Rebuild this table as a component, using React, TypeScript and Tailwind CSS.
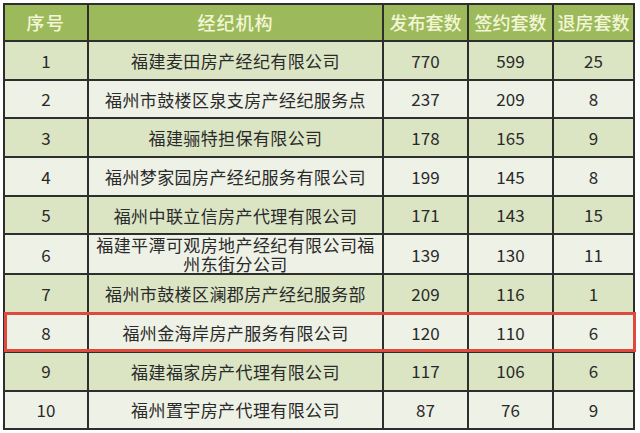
const rows = [
  { no: '1', name: '福建麦田房产经纪有限公司', pub: '770', sign: '599', back: '25' },
  { no: '2', name: '福州市鼓楼区泉支房产经纪服务点', pub: '237', sign: '209', back: '8' },
  { no: '3', name: '福建骊特担保有限公司', pub: '178', sign: '165', back: '9' },
  { no: '4', name: '福州梦家园房产经纪服务有限公司', pub: '199', sign: '145', back: '8' },
  { no: '5', name: '福州中联立信房产代理有限公司', pub: '171', sign: '143', back: '15' },
  { no: '6', name: '福建平潭可观房地产经纪有限公司福州东街分公司', pub: '139', sign: '130', back: '11' },
  { no: '7', name: '福州市鼓楼区澜郡房产经纪服务部', pub: '209', sign: '116', back: '1' },
  { no: '8', name: '福州金海岸房产服务有限公司', pub: '120', sign: '110', back: '6' },
  { no: '9', name: '福建福家房产代理有限公司', pub: '117', sign: '106', back: '6' },
  { no: '10', name: '福州置宇房产代理有限公司', pub: '87', sign: '76', back: '9' },
]

const font = { fontFamily: '"Noto Sans CJK SC", "Liberation Sans", sans-serif' }

export default function App() {
  return (
    <div className="w-[640px] h-[433px] bg-white pt-[3px] pl-[3px]" style={font}>
      <div className="relative w-[630px]">
        <table className="w-full border-collapse table-fixed text-[17px] text-[#2a2a2a]">
          <colgroup>
            <col className="w-[84px]" />
            <col className="w-[295px]" />
            <col className="w-[85px]" />
            <col className="w-[85px]" />
            <col className="w-[81px]" />
          </colgroup>
          <thead>
            <tr className="h-[37px] bg-[#9cba5c] text-[#f3f6d6] text-[18px]">
              <th className="border-2 border-[#2e2e2e] font-medium tracking-[1.5px]">序号</th>
              <th className="border-2 border-[#2e2e2e] font-medium tracking-[1px]">经纪机构</th>
              <th className="border-2 border-[#2e2e2e] font-medium px-0">发布套数</th>
              <th className="border-2 border-[#2e2e2e] font-medium px-0">签约套数</th>
              <th className="border-2 border-[#2e2e2e] font-medium px-0">退房套数</th>
            </tr>
          </thead>
          <tbody>
            {rows.map((r, i) => (
              <tr key={r.no} className={`h-[38.7px] ${i % 2 === 0 ? 'bg-[#dbe5c4]' : 'bg-[#eef1e6]'}`}>
                <td className="border-2 border-[#2e2e2e] text-center">{r.no}</td>
                <td className="border-2 border-[#2e2e2e] text-center px-[3px] leading-[19px] tracking-[0.4px]">{r.name}</td>
                <td className="border-2 border-[#2e2e2e] text-center">{r.pub}</td>
                <td className="border-2 border-[#2e2e2e] text-center">{r.sign}</td>
                <td className="border-2 border-[#2e2e2e] text-center">{r.back}</td>
              </tr>
            ))}
          </tbody>
        </table>
        {/* highlight around row 8 */}
        <div className="absolute left-[1px] right-[-3px] top-[309px] h-[40px] border-[3px] border-[#df4a3e] pointer-events-none" />
      </div>
    </div>
  )
}
